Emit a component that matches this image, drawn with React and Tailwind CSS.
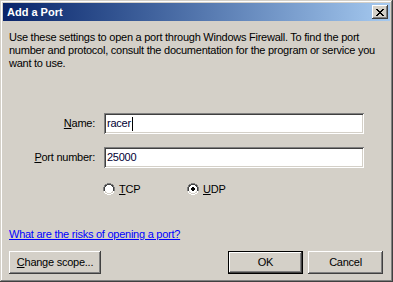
import { useState } from "react";

const raised =
  "shadow-[inset_-1px_-1px_#404040,inset_1px_1px_#ffffff,inset_-2px_-2px_#808080,inset_2px_2px_#d4d0c8]";
const sunken =
  "shadow-[inset_1px_1px_#808080,inset_-1px_-1px_#ffffff,inset_2px_2px_#404040,inset_-2px_-2px_#d4d0c8]";

function Radio({ checked }) {
  return (
    <svg width="12" height="12" viewBox="0 0 12 12" className="shrink-0">
      <path d="M4 0h4v1h2v1h1v2h1v4h-1v-4h-1v-2h-2v-1h-4v1h-2v2h-1v4h-1v-4h1v-2h1v-1h2z" fill="#808080" />
      <path d="M4 1h4v1h2v2h1v4h-1v-4h-1v-1h-1v-1h-4v1h-1v1h-1v4h-1v-4h1v-2h2z" fill="#404040" />
      <path d="M1 8h1v2h2v1h4v-1h2v-2h1v2h-1v1h-2v1h-4v-1h-2v-1h-1z" fill="#ffffff" />
      <path d="M2 8h1v1h1v1h4v-1h1v-1h1v2h-2v1h-4v-1h-2z" fill="#d4d0c8" />
      <path d="M4 2h4v1h1v1h1v4h-1v1h-1v1h-4v-1h-1v-1h-1v-4h1v-1h1z" fill="#ffffff" />
      {checked && <path d="M5 4h2v1h1v2h-1v1h-2v-1h-1v-2h1z" fill="#000000" />}
    </svg>
  );
}

function Button({ children, primary, className = "" }) {
  return (
    <div
      className={`h-[23px] flex items-center justify-center ${primary ? "border border-black" : ""} ${className}`}
    >
      <div className={`w-full h-full flex items-center justify-center bg-[#d4d0c8] ${raised}`}>
        {children}
      </div>
    </div>
  );
}

function Field({ label, value, caret }) {
  return (
    <div className="flex items-center">
      <div className="w-[92px] text-right">{label}</div>
      <div className={`ml-[9px] w-[260px] h-[21px] bg-white flex items-center pl-[3px] ${sunken}`}>
        <span className="text-[#000033]">{value}</span>
        {caret && <span className="w-px h-[14px] bg-black ml-[1px]" />}
      </div>
    </div>
  );
}

export default function App() {
  const [proto] = useState("UDP");

  return (
    <div
      className="w-[393px] h-[282px] bg-[#d4d0c8] p-[3px] text-[11px] tracking-[-0.25px] text-black shadow-[inset_-1px_-1px_#404040,inset_1px_1px_#d4d0c8,inset_-2px_-2px_#808080,inset_2px_2px_#ffffff] flex flex-col"
      style={{ fontFamily: '"Liberation Sans", Arial, sans-serif' }}
    >
      {/* title bar */}
      <div className="h-[18px] w-[387px] bg-gradient-to-r from-[#0a246a] to-[#a6caf0] flex items-center justify-between pl-[4px] pr-[2px]">
        <span className="text-white font-bold text-[11px] tracking-normal leading-none">Add a Port</span>
        <div className={`w-[16px] h-[14px] bg-[#d4d0c8] flex items-center justify-center ${raised}`}>
          <svg width="8" height="7" viewBox="0 0 8 7">
            <path
              d="M0 0h2v1h1v1h2v-1h1v-1h2v1h-1v1h-1v1h-1v1h1v1h1v1h1v1h-2v-1h-1v-1h-2v1h-1v1h-2v-1h1v-1h1v-1h1v-1h-1v-1h-1v-1h-1z"
              fill="#000"
            />
          </svg>
        </div>
      </div>

      {/* body */}
      <div className="flex flex-col pl-[6px] pt-[10px]">
        <p className="leading-[13px] whitespace-nowrap">
          Use these settings to open a port through Windows Firewall. To find the port
          <br />
          number and protocol, consult the documentation for the program or service you
          <br />
          want to use.
        </p>

        <div className="mt-[43px] -ml-[6px] flex flex-col gap-[13px]">
          <Field
            label={
              <>
                <span className="underline">N</span>ame:
              </>
            }
            value="racer"
            caret
          />
          <Field
            label={
              <>
                <span className="underline">P</span>ort number:
              </>
            }
            value="25000"
          />
        </div>

        <div className="mt-[13px] ml-[94px] flex items-center">
          <div className="flex items-center gap-[4px] w-[84px]">
            <Radio checked={proto === "TCP"} />
            <span>
              <span className="underline">T</span>CP
            </span>
          </div>
          <div className="flex items-center gap-[4px]">
            <Radio checked={proto === "UDP"} />
            <span>
              <span className="underline">U</span>DP
            </span>
          </div>
        </div>

        <a className="mt-[30px] text-[#0000ff] underline leading-[13px] w-fit">
          What are the risks of opening a port?
        </a>

        <div className="mt-[10px] flex items-center w-[374px]">
          <Button className="w-[92px]">
            <span>
              <span className="underline">C</span>hange scope...
            </span>
          </Button>
          <div className="ml-auto flex gap-[5px]">
            <Button primary className="w-[75px]">
              OK
            </Button>
            <Button className="w-[75px]">Cancel</Button>
          </div>
        </div>
      </div>
    </div>
  );
}
